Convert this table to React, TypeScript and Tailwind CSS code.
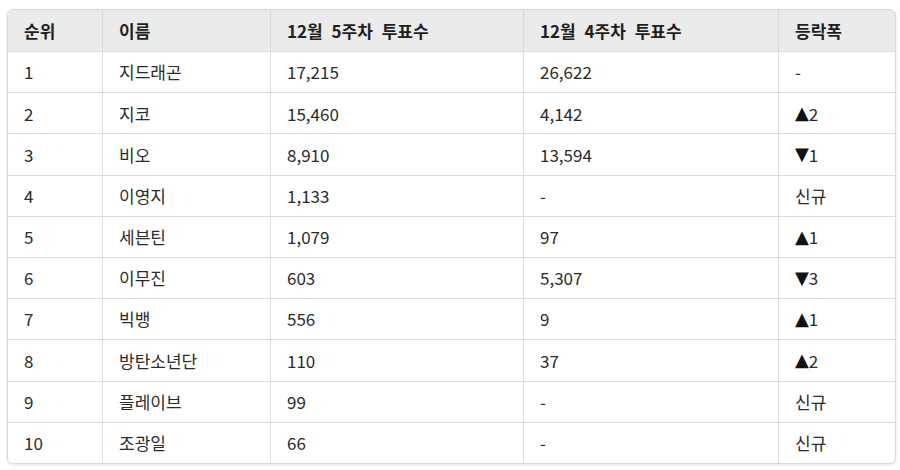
const ROWS = [
  { rank: '1', name: '지드래곤', week5: '17,215', week4: '26,622', change: '-' },
  { rank: '2', name: '지코', week5: '15,460', week4: '4,142', change: '▲2' },
  { rank: '3', name: '비오', week5: '8,910', week4: '13,594', change: '▼1' },
  { rank: '4', name: '이영지', week5: '1,133', week4: '-', change: '신규' },
  { rank: '5', name: '세븐틴', week5: '1,079', week4: '97', change: '▲1' },
  { rank: '6', name: '이무진', week5: '603', week4: '5,307', change: '▼3' },
  { rank: '7', name: '빅뱅', week5: '556', week4: '9', change: '▲1' },
  { rank: '8', name: '방탄소년단', week5: '110', week4: '37', change: '▲2' },
  { rank: '9', name: '플레이브', week5: '99', week4: '-', change: '신규' },
  { rank: '10', name: '조광일', week5: '66', week4: '-', change: '신규' },
];

const GRID = 'grid grid-cols-[94px_168px_253px_255px_1fr]';

function Change({ value }: { value: string }) {
  const arrow = value.charAt(0);
  if (arrow === '▲' || arrow === '▼') {
    return (
      <span className="flex items-center">
        <span className="font-['DejaVu_Sans'] text-[18px] leading-none text-[#111]">{arrow}</span>
        <span>{value.slice(1)}</span>
      </span>
    );
  }
  return <span>{value}</span>;
}

export default function App() {
  return (
    <div className="w-[900px] h-[470px] bg-white pt-[9px] pl-[7px] font-['Noto_Sans_CJK_KR',sans-serif] text-[17px] text-[#2b2b2b]">
      <div className="w-[889px] rounded-md border border-[#d9d9d9] shadow-[0_1px_3px_rgba(0,0,0,0.12)] overflow-hidden">
        {/* Header */}
        <div className={`${GRID} h-[41px] bg-[#ebebeb] font-bold text-[#1f1f1f] [word-spacing:5px]`}>
          {['순위', '이름', '12월 5주차 투표수', '12월 4주차 투표수', '등락폭'].map((h, i) => (
            <div
              key={h}
              className={`flex items-center pl-[16px] ${i > 0 ? 'border-l border-[#d9d9d9]' : ''}`}
            >
              {h}
            </div>
          ))}
        </div>

        {ROWS.map((r) => (
          <div key={r.rank} className={`${GRID} h-[41.2px] border-t border-[#dedede]`}>
            <div className="flex items-center pl-[16px]">{r.rank}</div>
            <div className="flex items-center pl-[16px] border-l border-[#dedede]">{r.name}</div>
            <div className="flex items-center pl-[16px] border-l border-[#dedede]">{r.week5}</div>
            <div className="flex items-center pl-[16px] border-l border-[#dedede]">{r.week4}</div>
            <div className="flex items-center pl-[16px] border-l border-[#dedede]">
              <Change value={r.change} />
            </div>
          </div>
        ))}
      </div>
    </div>
  );
}
